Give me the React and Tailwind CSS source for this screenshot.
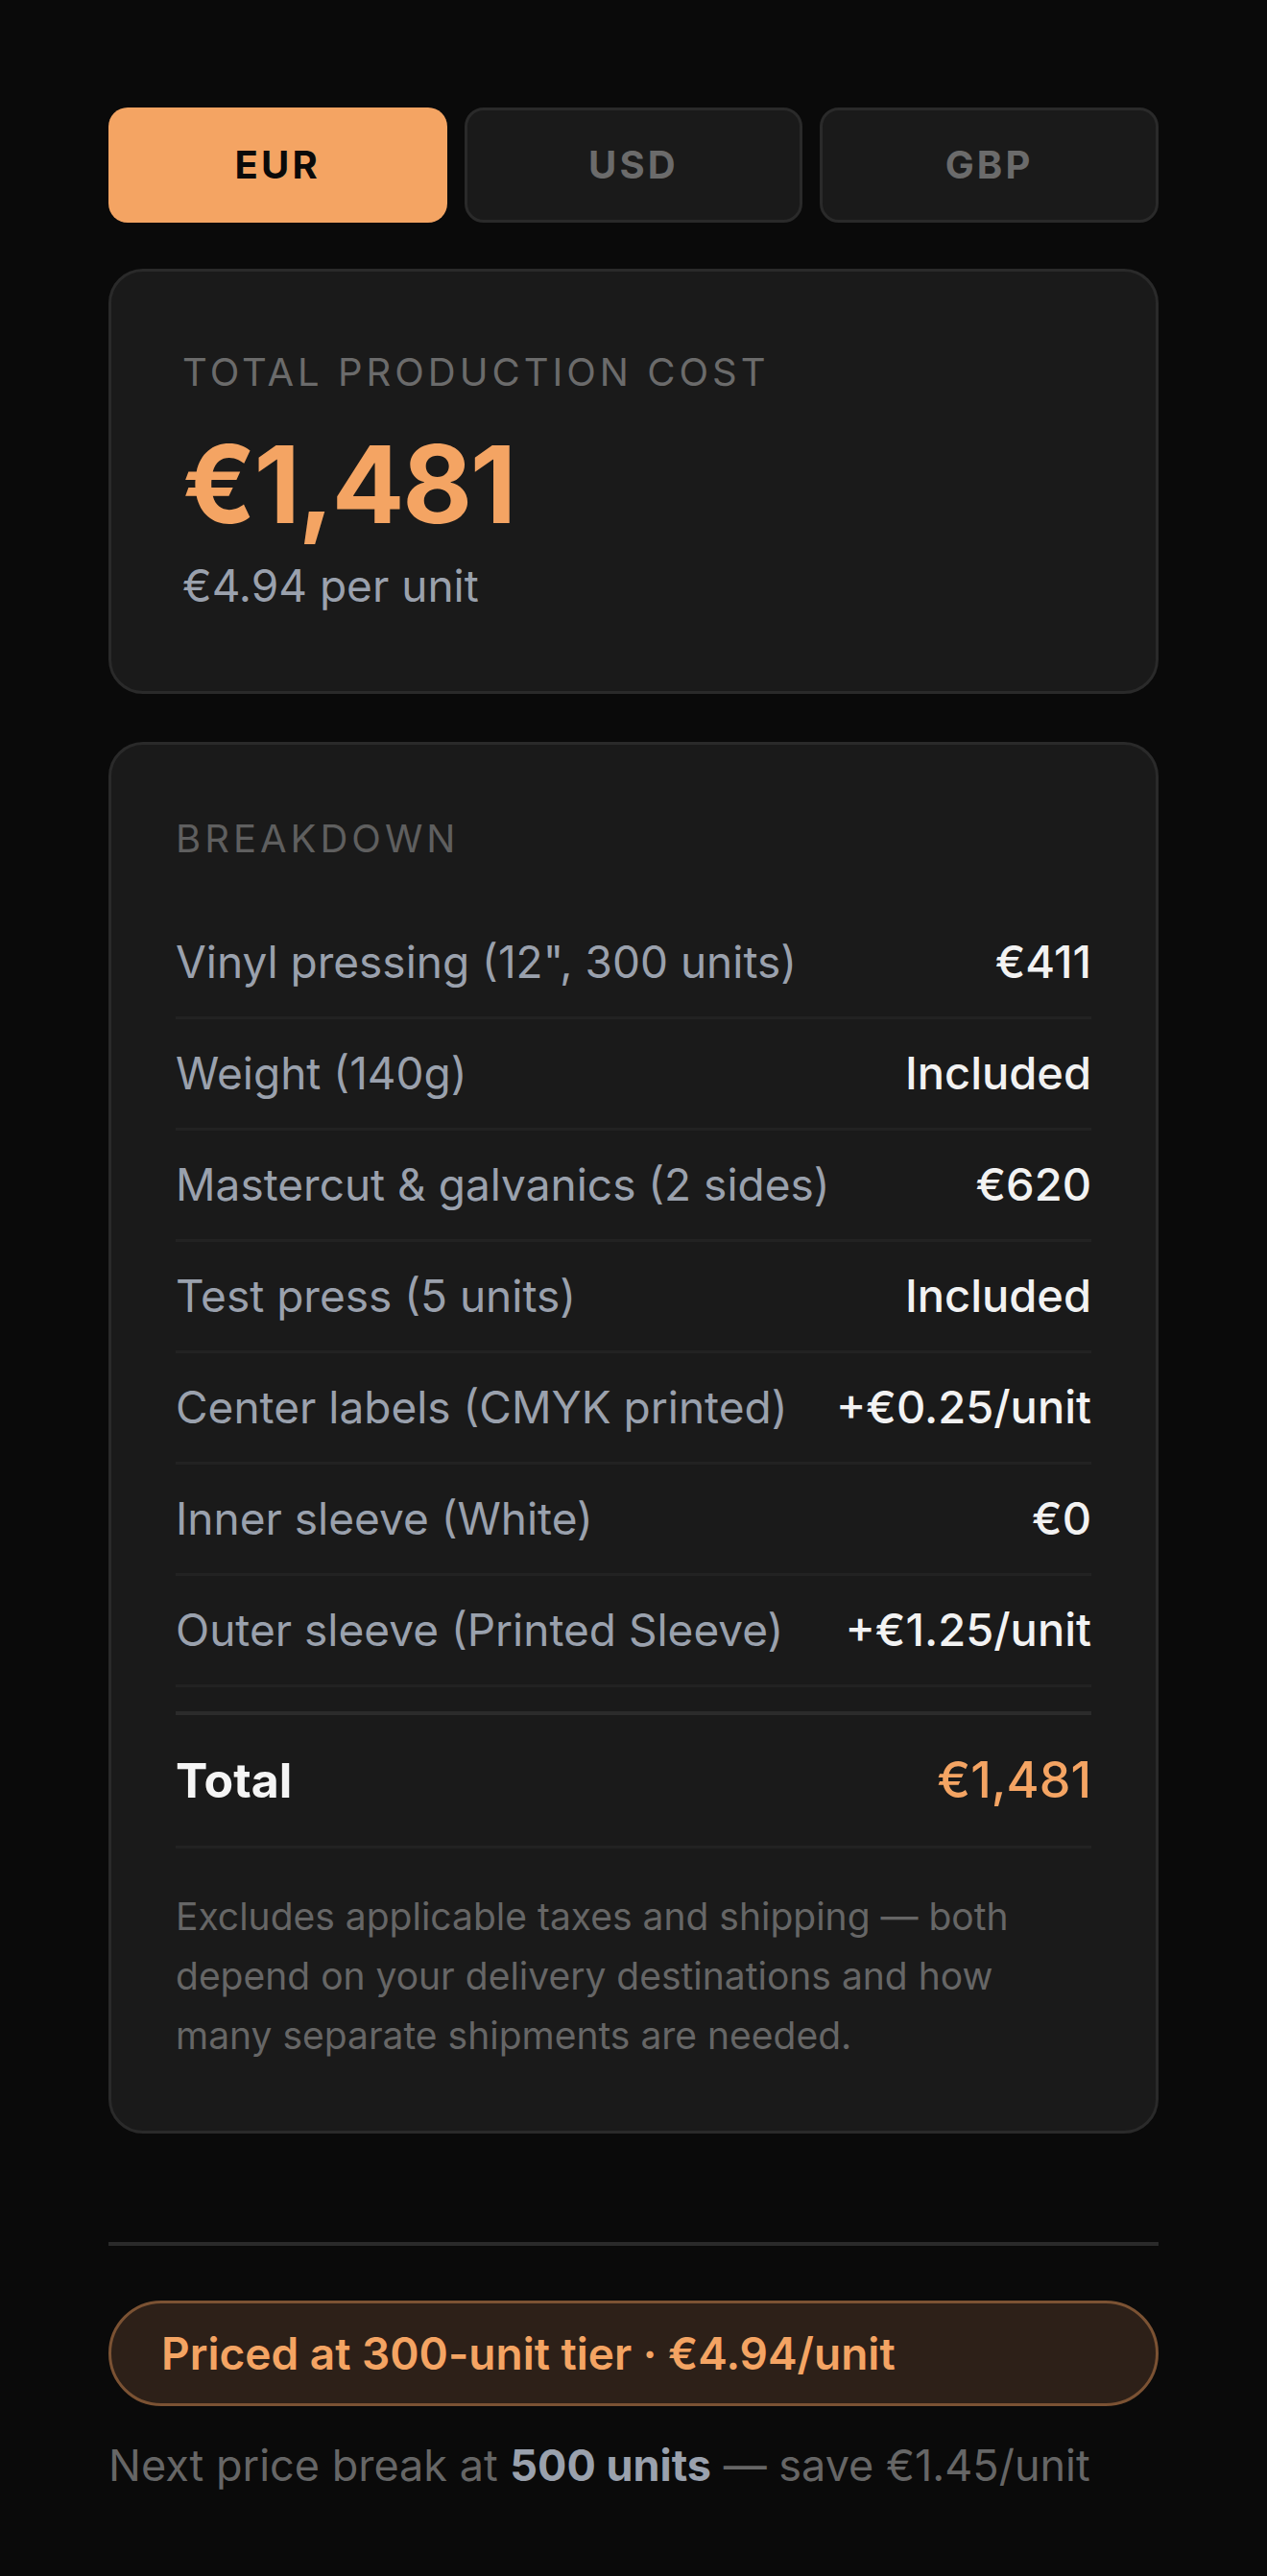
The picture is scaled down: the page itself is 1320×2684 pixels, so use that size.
import { useState } from 'react';

const rows = [
  { label: 'Vinyl pressing (12", 300 units)', value: '€411' },
  { label: 'Weight (140g)', value: 'Included' },
  { label: 'Mastercut & galvanics (2 sides)', value: '€620' },
  { label: 'Test press (5 units)', value: 'Included' },
  { label: 'Center labels (CMYK printed)', value: '+€0.25/unit' },
  { label: 'Inner sleeve (White)', value: '€0' },
  { label: 'Outer sleeve (Printed Sleeve)', value: '+€1.25/unit' },
];

export default function App() {
  const [currency, setCurrency] = useState('EUR');

  return (
    <div className="min-h-[2684px] bg-[#0a0a0a] font-['Inter',sans-serif] px-[113px] pt-[112px] pb-[80px]">
      {/* Currency tabs */}
      <div className="grid grid-cols-3 gap-[18px]">
        {['EUR', 'USD', 'GBP'].map((c) => (
          <button
            key={c}
            onClick={() => setCurrency(c)}
            className={`h-[120px] rounded-[20px] text-[40px] font-bold tracking-[0.08em] ${
              currency === c
                ? 'bg-[#f4a463] text-[#0a0a0a]'
                : 'bg-[#1a1a1a] border-[3px] border-[#2a2a2a] text-[#6b6b6b]'
            }`}
          >
            {c}
          </button>
        ))}
      </div>

      {/* Total card */}
      <div className="mt-[48px] rounded-[36px] border-[3px] border-[#2a2a2a] bg-[#1a1a1a] pl-[74px] pr-[70px] pt-[79px] pb-[78px]">
        <p className="text-[40px] leading-[52px] uppercase tracking-[0.1em] text-[#6b6b6b]">
          Total production cost
        </p>
        <p className="mt-[32px] text-[112px] leading-[116px] font-bold tracking-[-0.02em] text-[#f4a463]">
          €1,481
        </p>
        <p className="mt-[16px] text-[46px] leading-[64px] text-[#9aa1ad]">€4.94 per unit</p>
      </div>

      {/* Breakdown card */}
      <div className="mt-[50px] rounded-[36px] border-[3px] border-[#2a2a2a] bg-[#1a1a1a] px-[67px] pt-[72px] pb-[68px]">
        <p className="text-[40px] leading-[52px] uppercase tracking-[0.1em] text-[#5f5f5f]">
          Breakdown
        </p>
        <div className="mt-[46px]">
          {rows.map((r) => (
            <div
              key={r.label}
              className="flex h-[116px] items-center justify-between border-b-[3px] border-[#222222]"
            >
              <span className="text-[46px] text-[#9aa1ad]">{r.label}</span>
              <span className="text-[47px] font-medium text-[#f2f2f2]">{r.value}</span>
            </div>
          ))}
        </div>
        <div className="mt-[25px] flex h-[143px] items-center justify-between border-t-[4px] border-b-[3px] border-t-[#2b2b2b] border-b-[#222222]">
          <span className="text-[50px] font-bold text-[#f5f5f5]">Total</span>
          <span className="text-[52px] font-medium text-[#f4a463]">€1,481</span>
        </div>
        <p className="mt-[40px] text-[39px] leading-[62px] text-[#666666]">
          Excludes applicable taxes and shipping — both depend on your delivery destinations and how
          many separate shipments are needed.
        </p>
      </div>

      {/* Tier info */}
      <div className="mt-[113px] h-[4px] bg-[#2a2a2a]" />
      <div className="mt-[57px] flex h-[110px] items-center rounded-full border-[3px] border-[#7b5233] bg-[#2d2018] px-[52px]">
        <span className="text-[46px] font-semibold text-[#f4a463]">
          Priced at 300-unit tier · €4.94/unit
        </span>
      </div>
      <p className="mt-[28px] text-[45px] text-[#666666]">
        Next price break at <span className="font-bold text-[#9aa1ad]">500 units</span> — save €1.45/unit
      </p>
    </div>
  );
}
